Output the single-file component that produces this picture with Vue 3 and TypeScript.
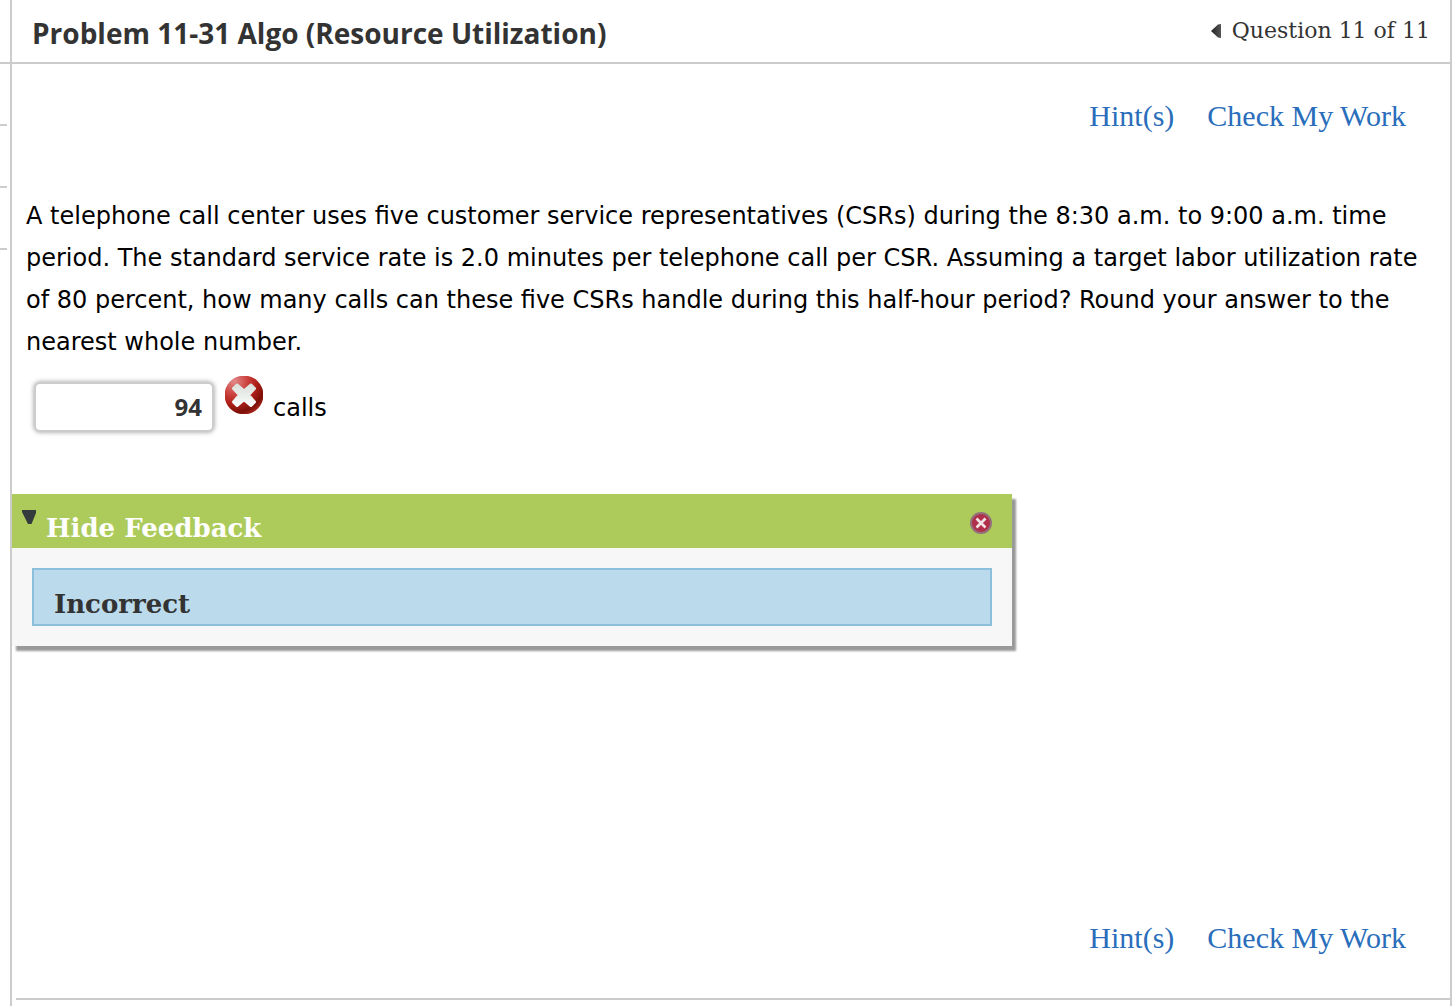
<script setup lang="ts">
import { ref } from 'vue'

const answer = ref('94')
const feedbackOpen = ref(true)
const feedbackVisible = ref(true)
const gutterRows = [1, 2, 3]
</script>

<template>
  <div class="page">
    <div class="gutter">
      <div class="gutter-head"></div>
      <div v-for="row in gutterRows" :key="row" class="gutter-row"></div>
    </div>
    <div class="main">
      <header class="header">
        <h1 class="title">Problem 11-31 Algo (Resource Utilization)</h1>
        <div class="pager">
          <button type="button" class="previous" aria-label="Previous question">
            <svg width="10" height="14" viewBox="0 0 10 14">
              <defs>
                <linearGradient id="arrow" x1="0" y1="0" x2="1" y2="0">
                  <stop offset="0" stop-color="#222" />
                  <stop offset="1" stop-color="#555" />
                </linearGradient>
              </defs>
              <path d="M0 7 L7 0.5 L10 0 V14 L7 13.5 Z" fill="url(#arrow)" />
            </svg>
          </button>
          <span>Question 11 of 11</span>
        </div>
      </header>

      <nav class="actions">
        <a href="#hints">Hint(s)</a>
        <a href="#check">Check My Work</a>
      </nav>

      <main class="problem">
        <p class="question">
          A telephone call center uses five customer service representatives (CSRs) during the 8:30 a.m. to 9:00 a.m. time
          period. The standard service rate is 2.0 minutes per telephone call per CSR. Assuming a target labor utilization rate
          of 80 percent, how many calls can these five CSRs handle during this half-hour period? Round your answer to the
          nearest whole number.
        </p>
        <div class="answer">
          <input id="answer" v-model="answer" class="answer-box" type="text" />
          <svg class="wrong" width="38" height="38" viewBox="0 0 38 38" role="img" aria-label="Incorrect answer">
            <defs>
              <radialGradient id="ball" cx="0.25" cy="0.15" r="0.95">
                <stop offset="0" stop-color="#e08a88" />
                <stop offset="0.35" stop-color="#cc4440" />
                <stop offset="0.6" stop-color="#b02019" />
                <stop offset="0.85" stop-color="#7c1008" />
                <stop offset="1" stop-color="#b02820" />
              </radialGradient>
              <linearGradient id="cross" x1="0" y1="0" x2="0" y2="1">
                <stop offset="0" stop-color="#dce2de" />
                <stop offset="1" stop-color="#f8faf8" />
              </linearGradient>
            </defs>
            <circle cx="19" cy="19" r="19.4" fill="url(#ball)" />
            <path
              d="M12 9 L19 15 L26 9 L29.5 12.5 L23.5 19 L29.5 26 L26 29.5 L19 23.5 L12 29.5 L8.5 26 L14.5 19 L8.5 12.5 Z"
              fill="url(#cross)" stroke="url(#cross)" stroke-width="3" stroke-linejoin="round"
            />
          </svg>
          <label for="answer">calls</label>
        </div>
      </main>

      <section v-if="feedbackVisible" class="feedback">
        <div class="feedback-head">
          <button type="button" class="toggle" @click="feedbackOpen = !feedbackOpen">
            <svg width="14" height="14" viewBox="0 0 14 14">
              <path d="M0 0 H14 V3 L9.5 14 H6 L0 2 Z" fill="#333b3c" />
            </svg>
            <span>Hide Feedback</span>
          </button>
          <button type="button" class="close" aria-label="Close feedback" @click="feedbackVisible = false">
            <svg width="22" height="22" viewBox="0 0 22 22">
              <circle cx="11" cy="11" r="10" fill="#b0304c" stroke="#93707a" stroke-width="2" />
              <path d="M6.5 6.5 L15.5 15.5 M15.5 6.5 L6.5 15.5" stroke="#f4e4e8" stroke-width="2.6" />
            </svg>
          </button>
        </div>
        <div v-if="feedbackOpen" class="feedback-body">
          <div class="result">Incorrect</div>
        </div>
      </section>

      <nav class="actions actions-bottom">
        <a href="#hints">Hint(s)</a>
        <a href="#check">Check My Work</a>
      </nav>
      <div class="end-rule"></div>
    </div>
  </div>
</template>

<style>
body {
  margin: 0;
  background: #fff;
}
</style>

<style scoped>
.page {
  display: flex;
  min-height: 100vh;
  box-sizing: border-box;
  padding-right: 4px;
}

.gutter {
  flex: 0 0 10px;
}

.gutter-head,
.gutter-row {
  box-sizing: border-box;
  border-bottom: 2px solid #ccc;
}

.gutter-head {
  height: 64px;
}

.gutter-row {
  width: 7px;
  height: 62px;
}

.main {
  flex: 1;
  min-width: 0;
  display: flex;
  flex-direction: column;
  border: solid #ccc;
  border-width: 0 2px;
}

.header {
  display: flex;
  justify-content: space-between;
  align-items: flex-start;
  box-sizing: border-box;
  height: 64px;
  padding: 12px 20px 0 20px;
  border-bottom: 2px solid #ccc;
  color: #333;
}

.title {
  margin: 0;
  font: bold 28px/42px "Open Sans", sans-serif;
}

.pager {
  display: flex;
  align-items: center;
  gap: 11px;
  font: 22px/38px "DejaVu Serif", serif;
}

button {
  padding: 0;
  border: 0;
  background: none;
  cursor: pointer;
}

svg {
  display: block;
}

.actions {
  display: flex;
  justify-content: flex-end;
  gap: 33px;
  padding: 34px 44px 0 0;
  font: 30px/36px "Liberation Serif", serif;
}

.actions a {
  color: #2a6ebb;
  text-decoration: none;
}

.problem {
  padding: 61px 14px 0;
  font: 24px/42px "DejaVu Sans", sans-serif;
  color: #000;
}

.question {
  margin: 0;
}

.answer {
  display: flex;
  align-items: flex-start;
  padding: 13px 0 0 8px;
}

.answer-box {
  box-sizing: border-box;
  width: 180px;
  height: 50px;
  margin: 6px 11px 0 0;
  padding: 0 10px 2px;
  border: 2px solid #ccc;
  border-radius: 6px;
  box-shadow: 0 0 5px #999;
  font: bold 24px "Open Sans", sans-serif;
  color: #333;
  text-align: right;
}

.answer label {
  margin: 11px 0 0 10px;
}

.feedback {
  width: 100%;
  max-width: 1000px;
  margin-top: 62px;
  background: #f7f7f7;
  box-shadow: 4px 5px 2px #999;
}

.feedback-head {
  display: flex;
  justify-content: space-between;
  align-items: flex-start;
  box-sizing: border-box;
  height: 54px;
  padding: 16px 20px 0 10px;
  background: #adcb5b;
}

.toggle {
  display: flex;
  align-items: flex-start;
  gap: 10px;
  font: bold 26px/36px "DejaVu Serif", serif;
  color: #fff;
}

.close {
  margin-top: 2px;
}

.feedback-body {
  padding: 20px;
}

.result {
  box-sizing: border-box;
  height: 58px;
  padding: 16px 20px 0;
  border: 2px solid #8cbfdb;
  background: #bbdaeb;
  font: bold 26px/36px "DejaVu Serif", serif;
  color: #333;
}

.actions-bottom {
  margin-top: auto;
  padding-bottom: 42px;
}

.end-rule {
  margin: 0 0 6px 4px;
  border-bottom: 2px solid #ccc;
}
</style>
